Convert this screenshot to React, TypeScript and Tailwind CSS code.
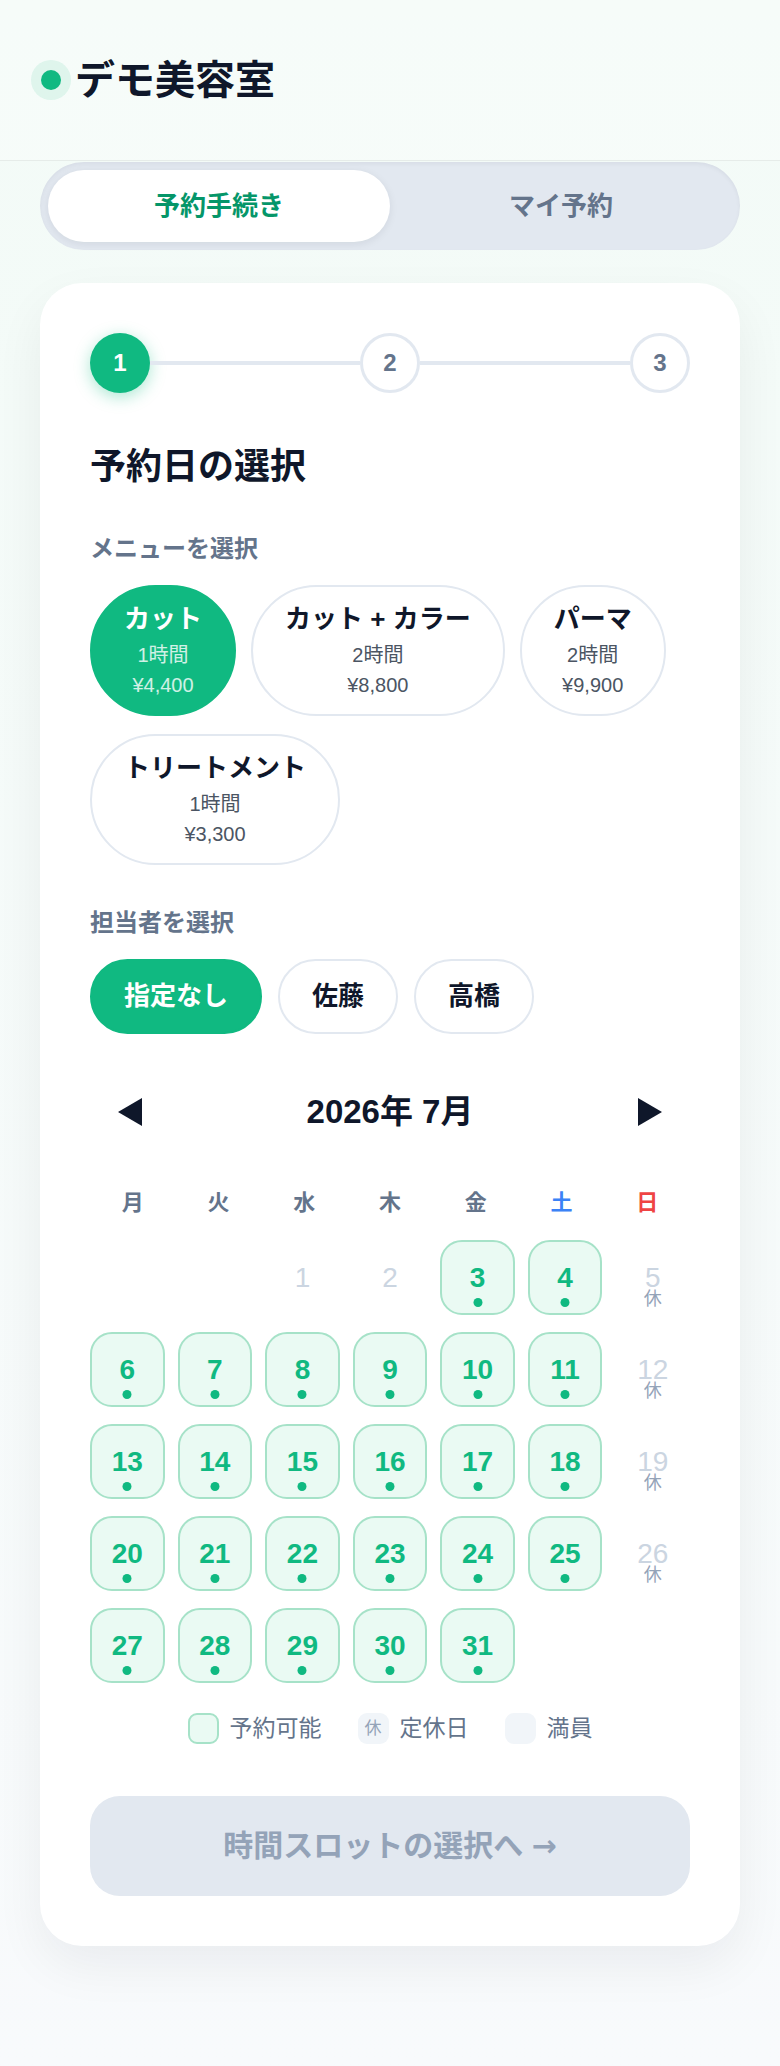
import { useState } from "react";

const menus = [
  { name: "カット", time: "1時間", price: "¥4,400" },
  { name: "カット + カラー", time: "2時間", price: "¥8,800" },
  { name: "パーマ", time: "2時間", price: "¥9,900" },
  { name: "トリートメント", time: "1時間", price: "¥3,300" },
];

const staffList = ["指定なし", "佐藤", "高橋"];
const weekdays = ["月", "火", "水", "木", "金", "土", "日"];

// July 2026 starts on a Wednesday (Monday-first grid)
const days: (number | null)[] = [null, null, ...Array.from({ length: 31 }, (_, i) => i + 1)];

const Step = ({ n, active }: { n: number; active?: boolean }) => (
  <div
    className={
      active
        ? "w-[60px] h-[60px] rounded-full bg-[#10b981] text-white flex items-center justify-center text-[24px] font-bold shadow-[0_4px_16px_rgba(16,185,129,0.35)] shrink-0"
        : "w-[60px] h-[60px] rounded-full bg-white border-[3px] border-[#e2e8f0] text-[#64748b] flex items-center justify-center text-[24px] font-bold shrink-0"
    }
  >
    {n}
  </div>
);

const Triangle = ({ dir }: { dir: "left" | "right" }) => (
  <svg width="24" height="28" viewBox="0 0 24 28">
    {dir === "left" ? <polygon points="24,0 24,28 0,14" fill="#0f172a" /> : <polygon points="0,0 0,28 24,14" fill="#0f172a" />}
  </svg>
);

const App = () => {
  const [tab, setTab] = useState(0);
  const [menu, setMenu] = useState(0);
  const [staff, setStaff] = useState(0);

  return (
    <div className="min-h-screen bg-gradient-to-b from-[#f3fbf7] to-[#f8fafc] font-['Liberation_Sans','Noto_Sans_CJK_JP',sans-serif] text-[#0f172a]">
      <header className="h-[161px] px-[41px] flex items-center gap-[14px] border-b border-[#e6ece9] bg-white/30">
        <span className="w-[20px] h-[20px] rounded-full bg-[#10b981] shadow-[0_0_0_10px_rgba(16,185,129,0.1)]" />
        <h1 className="text-[40px] font-bold leading-[60px]">デモ美容室</h1>
      </header>

      <main className="px-[40px] pb-[120px]">
        <div className="mt-[1px] flex p-2 rounded-full bg-[#e2e8f0] shadow-[inset_0_2px_4px_rgba(15,23,42,0.05)]">
          {["予約手続き", "マイ予約"].map((t, i) => (
            <button
              key={t}
              onClick={() => setTab(i)}
              className={
                tab === i
                  ? "flex-1 h-[72px] rounded-full bg-white text-[#059669] text-[26px] font-bold shadow-[0_2px_8px_rgba(15,23,42,0.08)]"
                  : "flex-1 h-[72px] rounded-full text-[#64748b] text-[26px] font-bold"
              }
            >
              {t}
            </button>
          ))}
        </div>

        <section className="mt-[33px] bg-white rounded-[42px] p-[50px] shadow-[0_20px_50px_rgba(15,23,42,0.06)]">
          {/* stepper */}
          <div className="flex items-center">
            <Step n={1} active />
            <div className="flex-1 h-[4px] bg-[#e2e8f0]" />
            <Step n={2} />
            <div className="flex-1 h-[4px] bg-[#e2e8f0]" />
            <Step n={3} />
          </div>

          <h2 className="mt-[50px] text-[36px] font-bold leading-[48px]">予約日の選択</h2>

          <p className="mt-[40px] text-[24px] font-bold leading-[36px] text-[#64748b]">メニューを選択</p>
          <div className="mt-[18px] flex flex-wrap gap-x-[15px] gap-y-[18px]">
            {menus.map((m, i) => (
              <button
                key={m.name}
                onClick={() => setMenu(i)}
                className={
                  menu === i
                    ? "h-[131px] px-[32px] rounded-full border-2 border-[#10b981] bg-[#10b981] text-white flex flex-col items-center justify-center"
                    : "h-[131px] px-[32px] rounded-full border-2 border-[#e2e8f0] bg-white flex flex-col items-center justify-center"
                }
              >
                <span className="text-[26px] font-bold leading-[36px] whitespace-nowrap">{m.name}</span>
                <span className={menu === i ? "mt-[3px] text-[20px] leading-[30px] text-white/80" : "mt-[3px] text-[20px] leading-[30px] text-[#4b5563]"}>
                  {m.time}
                </span>
                <span className={menu === i ? "text-[20px] leading-[30px] text-white/80" : "text-[20px] leading-[30px] text-[#4b5563]"}>
                  {m.price}
                </span>
              </button>
            ))}
          </div>

          <p className="mt-[40px] text-[24px] font-bold leading-[36px] text-[#64748b]">担当者を選択</p>
          <div className="mt-[18px] flex gap-[16px]">
            {staffList.map((s, i) => (
              <button
                key={s}
                onClick={() => setStaff(i)}
                className={
                  staff === i
                    ? "h-[75px] px-[32px] rounded-full border-2 border-[#10b981] bg-[#10b981] text-white text-[26px] font-bold"
                    : "h-[75px] px-[32px] rounded-full border-2 border-[#e2e8f0] bg-white text-[26px] font-bold"
                }
              >
                {s}
              </button>
            ))}
          </div>

          {/* calendar */}
          <div className="mt-[58px] h-[40px] flex items-center justify-between">
            <button className="w-[80px] flex justify-center">
              <Triangle dir="left" />
            </button>
            <span className="text-[33px] font-bold leading-[40px]">2026年 7月</span>
            <button className="w-[80px] flex justify-center">
              <Triangle dir="right" />
            </button>
          </div>

          <div className="mt-[54px] grid grid-cols-7">
            {weekdays.map((w, i) => (
              <div
                key={w}
                className={
                  i === 5
                    ? "text-center text-[22px] font-bold leading-[34px] text-[#3b82f6]"
                    : i === 6
                    ? "text-center text-[22px] font-bold leading-[34px] text-[#ef4444]"
                    : "text-center text-[22px] font-bold leading-[34px] text-[#64748b]"
                }
              >
                {w}
              </div>
            ))}
          </div>

          <div className="mt-[20px] grid grid-cols-7 gap-x-[13px] gap-y-[17px]">
            {days.map((d, idx) => {
              if (d === null) return <div key={"e" + idx} className="h-[75px]" />;
              const closed = idx % 7 === 6;
              const past = d <= 2;
              if (closed) {
                return (
                  <div key={d} className="relative h-[75px] flex items-center justify-center">
                    <span className="text-[28px] leading-[24px] text-[#cbd5e1]">{d}</span>
                    <span className="absolute left-0 right-0 bottom-[7px] text-center text-[18px] leading-[18px] text-[#94a3b8]">休</span>
                  </div>
                );
              }
              if (past) {
                return (
                  <div key={d} className="h-[75px] flex items-center justify-center">
                    <span className="text-[28px] leading-none text-[#cbd5e1]">{d}</span>
                  </div>
                );
              }
              return (
                <button
                  key={d}
                  className="relative h-[75px] rounded-[22px] border-2 border-[#a6e2c8] bg-[#eafaf3] flex items-center justify-center"
                >
                  <span className="text-[28px] font-bold leading-none text-[#10b981]">{d}</span>
                  <span className="absolute left-1/2 -translate-x-1/2 bottom-[6px] w-[9px] h-[9px] rounded-full bg-[#10b981]" />
                </button>
              );
            })}
          </div>

          <div className="mt-[30px] flex justify-center gap-[36px] text-[23px] leading-[31px] text-[#64748b]">
            <div className="flex items-center gap-[11px]">
              <span className="w-[31px] h-[31px] rounded-[9px] border-2 border-[#a6e2c8] bg-[#eafaf3]" />
              <span>予約可能</span>
            </div>
            <div className="flex items-center gap-[11px]">
              <span className="w-[31px] h-[31px] rounded-[9px] bg-[#f1f5f9] flex items-center justify-center text-[17px] text-[#94a3b8]">休</span>
              <span>定休日</span>
            </div>
            <div className="flex items-center gap-[11px]">
              <span className="w-[31px] h-[31px] rounded-[9px] bg-[#f1f5f9]" />
              <span>満員</span>
            </div>
          </div>

          <button disabled className="mt-[52px] w-full h-[100px] rounded-[30px] bg-[#e2e8f0] text-[30px] font-bold leading-[40px] text-[#94a3b8]">
            時間スロットの選択へ <span className="font-['DejaVu_Sans']">→</span>
          </button>
        </section>
      </main>
    </div>
  );
};

export default App;
